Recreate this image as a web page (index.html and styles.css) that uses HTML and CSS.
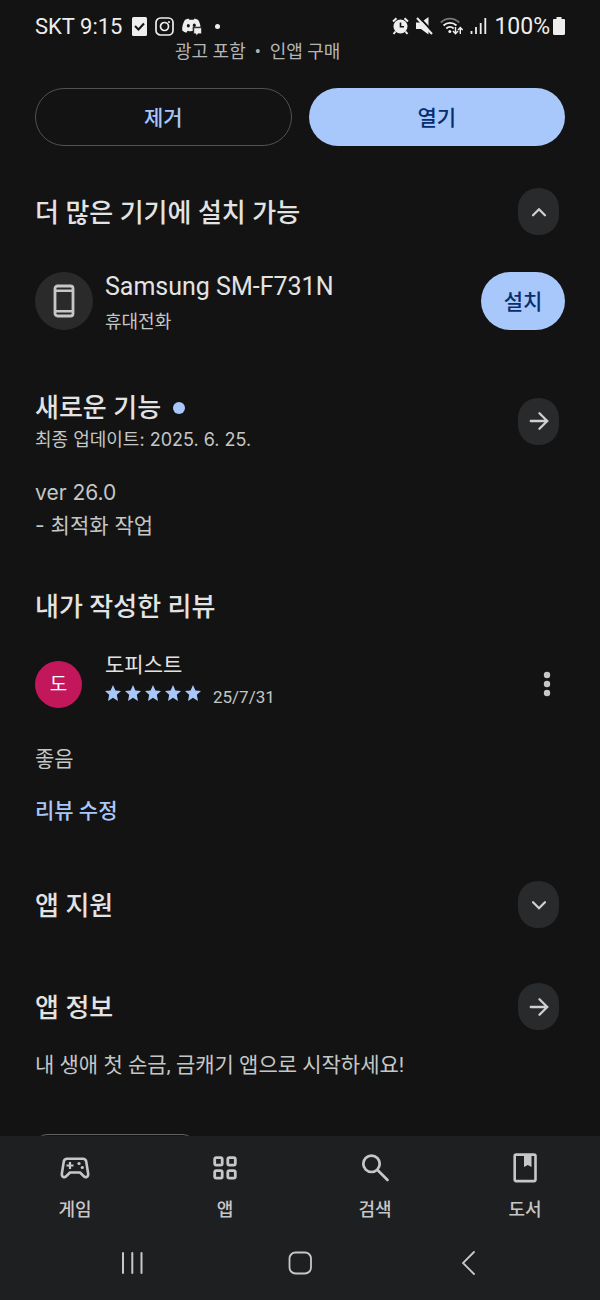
FILE: index.html
```html
<!DOCTYPE html>
<html lang="ko">
<head>
<meta charset="utf-8">
<meta name="viewport" content="width=device-width, initial-scale=1">
<title>앱 정보</title>
<link rel="stylesheet" href="styles.css">
</head>
<body>
<div class="screen">
  <header class="status">
    <div class="status-group status-left">
      <span class="status-text">SKT 9:15</span>
      <svg class="ic-check" width="15" height="19" viewBox="0 0 15 19"><rect width="15" height="19" rx="1.500" fill="#eee"/><path d="M3 9l3.500 3.500L12 6.500" fill="none" stroke="#131314" stroke-width="2"/></svg>
      <svg class="ic-insta" width="19" height="19" viewBox="0 0 19 19" fill="none" stroke="#eee" stroke-width="1.700"><rect x="1" y="1" width="17" height="17" rx="4.500"/><circle cx="9.500" cy="9.500" r="4"/><circle cx="14" cy="5" r=".6" fill="#eee" stroke-width="1"/></svg>
      <svg class="ic-discord" width="20" height="19" viewBox="0 0 20 19"><path d="M6.500 1.500 3 2.800C1 6 0 9.500.2 13.500c1.400 1.200 2.900 1.900 4.300 2.200l1-2c1.500.5 3.500.6 5.200.4V9.800h7.800C18.200 7 17.400 4.800 16 2.800l-3.500-1.300-.8 1.300H7.300z" fill="#eee"/><ellipse cx="6.300" cy="8.800" rx="1.500" ry="1.800" fill="#131314"/><ellipse cx="12.300" cy="8.300" rx="1.500" ry="1.800" fill="#131314"/><path d="M11.800 10.800h7.700v6h-3.500L14 19v-2.200h-2.200z" fill="#eee" stroke="#131314" stroke-width=".6"/></svg>
      <span class="status-dot"></span>
    </div>
    <div class="status-group status-right">
      <svg width="17" height="18" viewBox="0 0 17 18"><circle cx="8.500" cy="9.500" r="7" fill="#eee"/><path d="M1 4.500 4.500 1.300M16 4.500l-3.500-3.200M3.500 14.500l-2 2.500M13.500 14.500l2 2.500" stroke="#eee" stroke-width="2"/><path d="M8.500 5.500v4.300H12" fill="none" stroke="#131314" stroke-width="1.600"/></svg>
      <svg width="17" height="18" viewBox="0 0 17 18"><path d="M0 5.500h5L12.500 0v17.500L5 12H0z" fill="#eee"/><path d="M2.500-.5l15 16" stroke="#131314" stroke-width="2"/><path d="M1 1l15 16" stroke="#eee" stroke-width="2"/></svg>
      <svg class="ic-wifi" width="23" height="18" viewBox="0 0 23 18" fill="none" stroke-width="1.800"><path d="M.8 5.500C6 .2 14 .2 19.200 5.500" stroke="#777"/><path d="M3.500 8.500c3.700-3.500 9.300-3.500 13 0M6.300 11.500c2.200-2 5.200-2 7.400 0" stroke="#eee"/><circle cx="9.800" cy="14.500" r="1.500" fill="#eee"/><path d="M15.500 10v6.500M13 14l2.500 2.700L18 14M20.300 17v-6.300M18 13l2.300-2.500 2.400 2.500" stroke="#eee" stroke-width="1.400"/></svg>
      <svg width="17" height="18" viewBox="0 0 17 18" stroke="#eee" stroke-width="1.800"><path d="M1.500 14v3M6 10v7M10.700 6v11M15.300 1v16"/></svg>
      <span class="status-text">100%</span>
      <svg class="ic-battery" width="12" height="18" viewBox="0 0 12 18"><path d="M3.500 0h5v2H11q1 0 1 1v13.500q0 1.500-1.500 1.500h-9Q0 18 0 16.500V3q0-1 1-1h2.500z" fill="#eee"/></svg>
    </div>
  </header>

  <main class="content">
    <p class="notice">광고 포함&nbsp;&nbsp;•&nbsp;&nbsp;인앱 구매</p>
    <div class="actions">
      <button class="btn btn-outline" type="button">제거</button>
      <button class="btn btn-fill" type="button">열기</button>
    </div>

    <section class="devices">
      <div class="section-head">
        <h2 class="heading">더 많은 기기에 설치 가능</h2>
        <button class="round" type="button" aria-label="접기"><svg class="glyph" viewBox="0 0 24 24"><path d="M5.500 15.500 12 9l6.500 6.500"/></svg></button>
      </div>
      <div class="device">
        <span class="device-icon"><svg width="22" height="34" viewBox="0 0 22 34"><rect x="2" y="2" width="18" height="30" rx="2.500" fill="none" stroke="#c7c7c7" stroke-width="2.800"/><path d="M2 6.800h18M2 27.200h18" stroke="#c7c7c7" stroke-width="2.600"/></svg></span>
        <div class="device-text">
          <p class="device-name">Samsung SM-F731N</p>
          <p class="caption">휴대전화</p>
        </div>
        <button class="btn btn-fill btn-install" type="button">설치</button>
      </div>
    </section>

    <section class="news">
      <div class="section-head">
        <div>
          <h2 class="heading heading-dot">새로운 기능</h2>
          <p class="caption caption-date">최종 업데이트: 2025. 6. 25.</p>
        </div>
        <button class="round" type="button" aria-label="새로운 기능 더보기"><svg class="glyph" viewBox="0 0 24 24"><path d="M3 12h17M12.500 3.500 21 12l-8.500 8.500"/></svg></button>
      </div>
      <p class="notes">ver 26.0<br>- 최적화 작업</p>
    </section>

    <section class="review">
      <h2 class="heading">내가 작성한 리뷰</h2>
      <div class="reviewer">
        <span class="avatar">도</span>
        <div class="reviewer-text">
          <p class="reviewer-name">도피스트</p>
          <div class="rating">
            <span class="stars" role="img" aria-label="별점 5점">
              <svg class="star" viewBox="0 0 16 16"><path d="M8 0l2.400 5.400 5.600.5-4.200 3.900L13 16l-5-3.300L3 16l1.200-6.200L0 5.900l5.600-.5z"/></svg>
              <svg class="star" viewBox="0 0 16 16"><path d="M8 0l2.400 5.400 5.600.5-4.200 3.900L13 16l-5-3.300L3 16l1.200-6.200L0 5.900l5.600-.5z"/></svg>
              <svg class="star" viewBox="0 0 16 16"><path d="M8 0l2.400 5.400 5.600.5-4.200 3.900L13 16l-5-3.300L3 16l1.200-6.200L0 5.900l5.600-.5z"/></svg>
              <svg class="star" viewBox="0 0 16 16"><path d="M8 0l2.400 5.400 5.600.5-4.200 3.900L13 16l-5-3.300L3 16l1.200-6.200L0 5.900l5.600-.5z"/></svg>
              <svg class="star" viewBox="0 0 16 16"><path d="M8 0l2.400 5.400 5.600.5-4.200 3.900L13 16l-5-3.300L3 16l1.200-6.200L0 5.900l5.600-.5z"/></svg>
            </span>
            <time datetime="2025-07-31">25/7/31</time>
          </div>
        </div>
        <button class="more" type="button" aria-label="옵션 더보기"><svg width="8" height="26" viewBox="0 0 8 26" fill="#c7c7c7"><circle cx="4" cy="4" r="3.200"/><circle cx="4" cy="13" r="3.200"/><circle cx="4" cy="22" r="3.200"/></svg></button>
      </div>
      <p class="body review-body">좋음</p>
      <a class="edit" href="#">리뷰 수정</a>
    </section>

    <section class="support section-head">
      <h2 class="heading">앱 지원</h2>
      <button class="round" type="button" aria-label="펼치기"><svg class="glyph" viewBox="0 0 24 24"><path d="M5.500 9 12 15.500 18.500 9"/></svg></button>
    </section>

    <section class="about">
      <div class="section-head">
        <h2 class="heading">앱 정보</h2>
        <button class="round" type="button" aria-label="앱 정보 더보기"><svg class="glyph" viewBox="0 0 24 24"><path d="M3 12h17M12.500 3.500 21 12l-8.500 8.500"/></svg></button>
      </div>
      <p class="body about-body">내 생애 첫 순금, 금캐기 앱으로 시작하세요!</p>
      <div class="chip"></div>
    </section>
  </main>

  <footer class="bottom">
    <nav class="tabs">
      <a class="tab" href="#"><svg width="30" height="30" viewBox="0 0 30 30" fill="none" stroke="#c7c7c7" stroke-width="2.600" stroke-linejoin="round"><path d="M7 5.800h16c1.800 0 2.800.9 3.200 2.600l1.900 11.800c.6 3.800-2.300 4.900-4.300 3L20 19.500H10l-3.800 3.700c-2 1.900-4.900.8-4.300-3L3.800 8.400C4.200 6.700 5.200 5.800 7 5.800z"/><path d="M10 9v7M6.500 12.500h7" stroke-width="2.200"/><circle cx="19" cy="10.500" r="1.600" fill="#c7c7c7" stroke="none"/><circle cx="22.300" cy="14.500" r="1.600" fill="#c7c7c7" stroke="none"/></svg>게임</a>
      <a class="tab" href="#"><svg width="30" height="30" viewBox="0 0 30 30" fill="none" stroke="#c7c7c7" stroke-width="2.800"><rect x="4.700" y="4.600" width="7.500" height="7.500" rx="1.600"/><rect x="17.800" y="4.600" width="7.500" height="7.500" rx="1.600"/><rect x="4.700" y="17.600" width="7.500" height="7.500" rx="1.600"/><rect x="17.800" y="17.600" width="7.500" height="7.500" rx="1.600"/></svg>앱</a>
      <a class="tab" href="#"><svg width="30" height="30" viewBox="0 0 30 30" fill="none" stroke="#c7c7c7" stroke-width="2.700" stroke-linecap="round"><circle cx="11.500" cy="10.800" r="8.200"/><path d="M17.500 17 27.500 27"/></svg>검색</a>
      <a class="tab" href="#"><svg width="30" height="30" viewBox="0 0 30 30"><rect x="4.700" y="1.600" width="20.800" height="26.500" rx="1.500" fill="none" stroke="#c7c7c7" stroke-width="2.600"/><path d="M14 1h7.500v13l-3.750-2L14 14z" fill="#c7c7c7"/></svg>도서</a>
    </nav>
    <div class="system">
      <button class="sys" type="button" aria-label="최근 앱"><svg width="24" height="24" viewBox="0 0 24 24" stroke="#c7c7c7" stroke-width="2" stroke-linecap="round"><path d="M3 2v20M12.300 2v20M21.500 2v20"/></svg></button>
      <button class="sys" type="button" aria-label="홈"><svg width="24" height="24" viewBox="0 0 24 24" fill="none" stroke="#c7c7c7" stroke-width="1.800"><rect x="1.500" y="1.500" width="21.500" height="21" rx="6"/></svg></button>
      <button class="sys" type="button" aria-label="뒤로"><svg width="24" height="24" viewBox="0 0 24 24" fill="none" stroke="#c7c7c7" stroke-width="1.800" stroke-linecap="round"><path d="M18 1 7 12l11 11"/></svg></button>
    </div>
  </footer>
</div>
</body>
</html>
```
FILE: styles.css
```css
* { box-sizing: border-box; margin: 0; padding: 0; }

body {
  background: #131314;
  color: #e3e3e3;
  font-family: Roboto, "Noto Sans CJK KR", sans-serif;
}

button { border: 0; background: none; font: inherit; color: inherit; cursor: pointer; }
a { color: inherit; text-decoration: none; }
svg { display: block; flex: none; }

.screen { display: flex; flex-direction: column; height: 100vh; }

.status {
  display: flex;
  justify-content: space-between;
  padding: 14px 35px 0;
  flex: none;
}
.status-group { display: flex; align-items: center; height: 24px; }
.status-left { gap: 8px; }
.status-right { gap: 7px; }
.status-text { font-size: 23px; line-height: 24px; padding-top: 2px; color: #eee; }
.status-left .status-text { margin-right: 2px; font-size: 22px; }
.ic-battery { margin-left: -4px; }
.status-dot { width: 5px; height: 5px; margin-left: 5px; border-radius: 50%; background: #eee; }

.content { flex: 1; min-height: 0; overflow: hidden; padding: 0 35px; }

.notice { padding-left: 140px; font-size: 18px; line-height: 28px; color: #b4b6b5; }

.actions { display: grid; grid-template-columns: 1fr 1fr; gap: 17px; margin-top: 22px; }
.btn { height: 58px; padding-bottom: 2px; border-radius: 29px; font-size: 21px; font-weight: 500; }
.btn-outline { border: 1px solid #505152; color: #a8c7fa; }
.btn-fill { background: #a8c7fa; color: #062e6f; }
.btn-install { width: 84px; margin-left: auto; }

.section-head { display: flex; align-items: center; justify-content: space-between; padding-right: 6px; }
.heading { padding-top: 2px; font-size: 26px; line-height: 36px; font-weight: 500; }
.heading-dot { display: flex; align-items: center; gap: 12px; }
.heading-dot::after { content: ""; width: 12px; height: 12px; border-radius: 50%; background: #a8c7fa; }
.round {
  display: flex;
  align-items: center;
  justify-content: center;
  width: 41px;
  height: 47px;
  border-radius: 20px;
  background: #282a2c;
}
.glyph { width: 22px; height: 22px; fill: none; stroke: #d0d0d0; stroke-width: 2.5; stroke-linecap: round; }

.devices { margin-top: 42px; }
.device { display: flex; align-items: center; gap: 12px; margin-top: 33px; }
.device-icon {
  display: flex;
  align-items: center;
  justify-content: center;
  width: 58px;
  height: 58px;
  border-radius: 50%;
  background: #2a2a2b;
}
.device-text { padding-top: 2px; }
.device-name { font-size: 25px; line-height: 34px; }
.caption { font-size: 18px; line-height: 24px; color: #c4c7c5; }
.device .caption { margin-top: 6px; }

.news { margin-top: 54px; }
.caption-date, .notes { font-family: Inter, "Noto Sans CJK KR", sans-serif; }
.caption-date { line-height: 28px; }
.notes { margin-top: 22px; font-size: 21px; line-height: 33px; color: #c4c7c5; }

.review { margin-top: 45px; }
.reviewer { display: flex; align-items: center; margin-top: 26px; }
.avatar {
  width: 47px;
  height: 47px;
  margin-right: 23px;
  border-radius: 50%;
  background: #c2185b;
  color: #fff;
  font-size: 19px;
  line-height: 47px;
  text-align: center;
}
.reviewer-name { font-size: 21px; line-height: 28px; }
.rating { display: flex; align-items: center; gap: 12px; padding: 4px 0 6px; font-size: 17px; line-height: 28px; color: #c4c7c5; }
.stars { display: flex; gap: 4px; margin-bottom: 8px; }
.star { width: 16px; height: 16px; fill: #a8c7fa; }
.more { display: flex; align-items: center; justify-content: center; width: 36px; height: 48px; margin-left: auto; }
.body { font-size: 21px; line-height: 32px; color: #c4c7c5; }
.review-body { margin-top: 26px; }
.edit { display: block; margin-top: 20px; font-size: 21px; line-height: 32px; font-weight: 500; color: #a8c7fa; }

.support { margin-top: 54px; }
.about { margin-top: 55px; }
.about-body { margin-top: 19px; }
.chip { width: 160px; height: 48px; margin-top: 53px; border: 1px solid #606162; border-radius: 12px; }

.bottom { flex: none; background: #1e1f20; color: #c7c7c7; }
.tabs { display: grid; grid-template-columns: repeat(4, 1fr); }
.tab {
  display: flex;
  flex-direction: column;
  align-items: center;
  gap: 13px;
  padding-top: 17px;
  font-size: 18px;
  line-height: 28px;
  font-weight: 500;
}
.system { display: grid; grid-template-columns: repeat(3, 1fr); padding: 15px 48px 13px; }
.sys { display: flex; align-items: center; justify-content: center; height: 48px; }
```
